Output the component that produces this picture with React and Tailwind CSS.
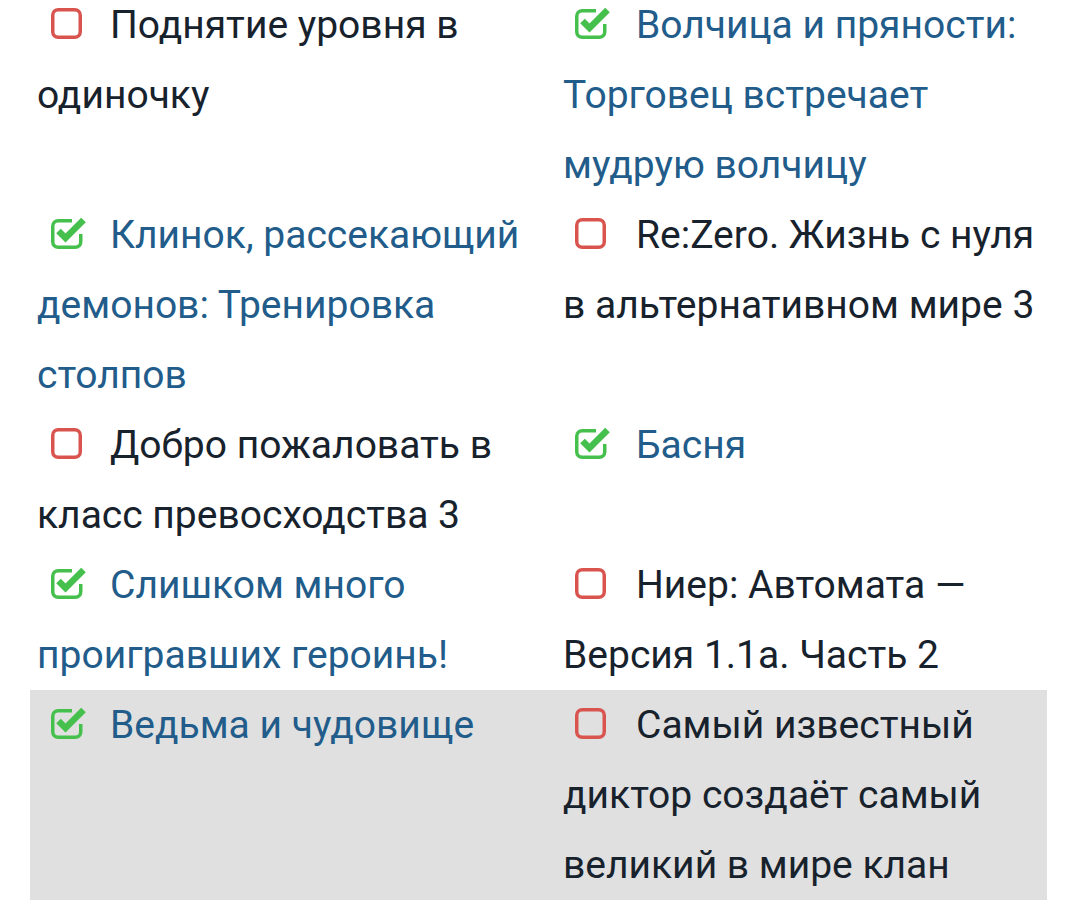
import React from "react";

const rows = [
  {
    l: { done: false, text: "Поднятие уровня в одиночку" },
    r: { done: true, text: "Волчица и пряности: Торговец встречает мудрую волчицу" },
  },
  {
    l: { done: true, text: "Клинок, рассекающий демонов: Тренировка столпов" },
    r: { done: false, text: "Re:Zero. Жизнь с нуля в альтернативном мире 3" },
  },
  {
    l: { done: false, text: "Добро пожаловать в класс превосходства 3" },
    r: { done: true, text: "Басня" },
  },
  {
    l: { done: true, text: "Слишком много проигравших героинь!" },
    r: { done: false, text: "Ниер: Автомата — Версия 1.1a. Часть 2" },
  },
  {
    l: { done: true, text: "Ведьма и чудовище" },
    r: { done: false, text: "Самый известный диктор создаёт самый великий в мире клан" },
    grey: true,
  },
];

function Unchecked() {
  return (
    <svg width="31" height="31" viewBox="0 0 31 31" className="inline-block align-[-1px]">
      <rect x="1.75" y="1.75" width="27.5" height="27.5" rx="5.5" fill="none" stroke="#d9544e" strokeWidth="3.5" />
    </svg>
  );
}

function Checked() {
  return (
    <svg width="36" height="35" viewBox="0 0 36 35" className="inline-block align-[-1px]">
      <path
        d="M21 6.75 H7.25 a5.5 5.5 0 0 0 -5.5 5.5 V27.75 a5.5 5.5 0 0 0 5.5 5.5 H24.25 a5.5 5.5 0 0 0 5.5 -5.5 V20"
        fill="none"
        stroke="#46c04c"
        strokeWidth="3.5"
      />
      <path d="M7.5 17 L14.5 24 L32.5 6" fill="none" stroke="#46c04c" strokeWidth="6.5" strokeLinejoin="miter" />
    </svg>
  );
}

function Cell({ item, right }) {
  return (
    <div className="pl-[7px] pr-[7px]">
      <p className={`text-[39px] leading-[70px] ${item.done ? "text-[#215c8a]" : "text-[#17222d]"}`}>
        <span className={`inline-block ${right ? "ml-[12px] w-[61px]" : "ml-[14px] w-[59px]"}`}>
          {item.done ? <Checked /> : <Unchecked />}
        </span>
        {item.text}
      </p>
    </div>
  );
}

export default function App() {
  return (
    <div className="w-[1080px] h-[920px] overflow-hidden bg-white" style={{ fontFamily: "Roboto, 'Noto Sans', sans-serif" }}>
      <div className="ml-[30px] mt-[-10px] w-[1017px]">
        {rows.map((row, i) => (
          <div key={i} className={`grid grid-cols-[526px_491px] ${row.grey ? "bg-[#e0e0e0]" : ""}`}>
            <Cell item={row.l} />
            <Cell item={row.r} right />
          </div>
        ))}
      </div>
    </div>
  );
}
